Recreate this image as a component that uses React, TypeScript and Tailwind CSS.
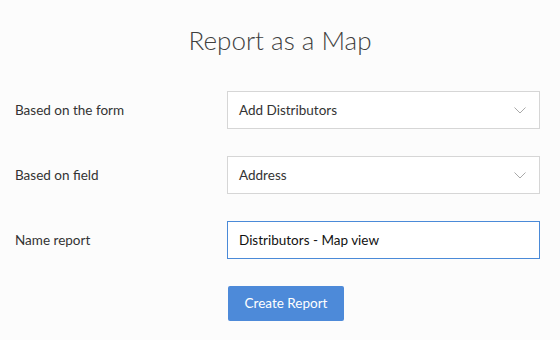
const font = { fontFamily: "Lato, 'Open Sans', sans-serif" }

function SelectBox({ value }: { value: string }) {
  return (
    <div className="flex items-center justify-between w-[313px] h-[38px] border border-[#d6d6d6] bg-white pl-[11px] pr-[13px]">
      <span className="text-[13.5px] text-[#333]">{value}</span>
      {/* chevron */}
      <svg width="12" height="7" viewBox="0 0 12 7" fill="none" className="mt-[1px]">
        <path d="M0.5 0.5 L6 6 L11.5 0.5" stroke="#a9a9a9" strokeWidth="1" />
      </svg>
    </div>
  )
}

export default function App() {
  return (
    <div className="w-[560px] h-[340px] bg-[#fcfcfc]" style={font}>
      <h1 className="pt-[22px] text-center text-[26px] font-light text-[#3f3f3f] leading-[36px]">
        Report as a Map
      </h1>

      <div className="mt-[33px] flex flex-col gap-[27px] pl-[15px]">
        {/* FORM */}
        <div className="flex items-center">
          <label className="w-[212px] text-[13.5px] text-[#333]">Based on the form</label>
          <SelectBox value="Add Distributors" />
        </div>

        <div className="flex items-center">
          <label className="w-[212px] text-[13.5px] text-[#333]">Based on field</label>
          <SelectBox value="Address" />
        </div>

        <div className="flex items-center">
          <label className="w-[212px] text-[13.5px] text-[#333]">Name report</label>
          <div className="flex items-center w-[313px] h-[38px] border border-[#4a8ad8] bg-white pl-[11px]">
            <span className="text-[13.5px] text-[#111]">Distributors - Map view</span>
          </div>
        </div>

        <div className="flex">
          <div className="w-[213px]" />
          <button className="w-[116px] h-[35px] rounded-[2px] bg-[#4d8ad9] text-white text-[13.5px]">
            Create Report
          </button>
        </div>
      </div>
    </div>
  )
}
